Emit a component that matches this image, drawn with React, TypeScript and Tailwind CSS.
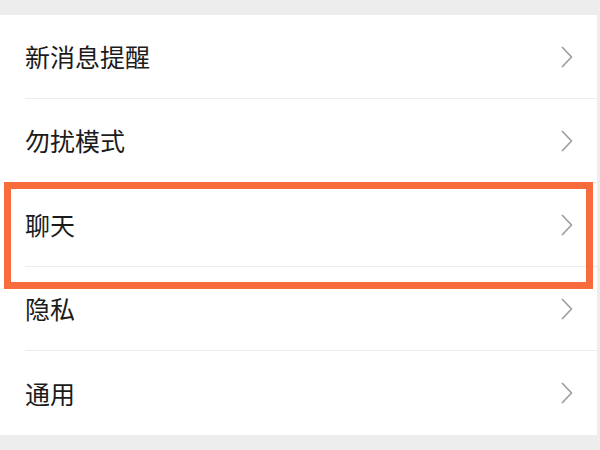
const ITEMS = ['新消息提醒', '勿扰模式', '聊天', '隐私', '通用'];

function Chevron() {
  return (
    <svg width="12" height="22" viewBox="0 0 12 22" fill="none" className="shrink-0">
      <path d="M1.5 1.5 L10.5 11 L1.5 20.5" stroke="#a0a0a0" strokeWidth="1.8" strokeLinecap="round" strokeLinejoin="round" />
    </svg>
  );
}

function Row({ label, last }: { label: string; last: boolean }) {
  return (
    <div className="flex h-[84px] items-center pl-[25px]">
      <div className={`flex h-full flex-1 items-center pr-[24px] ${last ? '' : 'border-b border-[#ececec]'}`}>
        <span className="flex-1 text-[25px] leading-none text-[#1b1b1b]">{label}</span>
        <Chevron />
      </div>
    </div>
  );
}

export default function App() {
  return (
    <div
      className="relative flex h-[450px] w-[600px] flex-col bg-[#ededed]"
      style={{ fontFamily: '"Noto Sans CJK SC", "Noto Sans", sans-serif' }}
    >
      <div className="h-[15px]" />
      <div className="mr-[3px] flex flex-col bg-white">
        {ITEMS.map((label, i) => (
          <Row key={label} label={label} last={i === ITEMS.length - 1} />
        ))}
      </div>
      {/* highlight around the chat row */}
      <div className="pointer-events-none absolute left-[4px] top-[182px] h-[107px] w-[589px] border-[7px] border-[#f76b3c]" />
    </div>
  );
}
